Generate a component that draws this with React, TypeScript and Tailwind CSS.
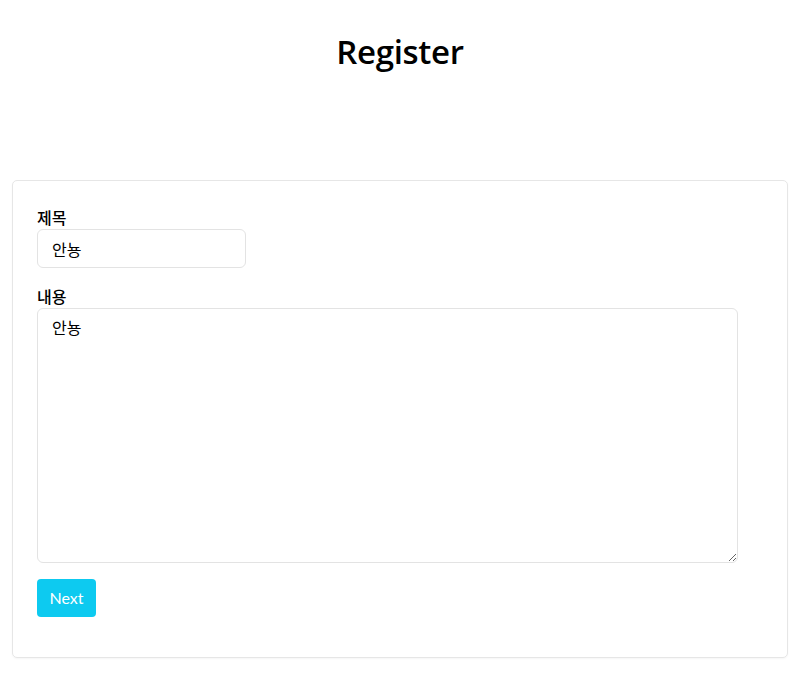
import React, { useState } from 'react';

const App: React.FC = () => {
  const [title, setTitle] = useState('안뇽');
  const [content, setContent] = useState('안뇽');

  return (
    <div className="min-h-screen bg-white text-black font-['Lato','Noto_Sans_CJK_KR',sans-serif]">
      {/* Header */}
      <h1 className="pt-[28px] text-center text-[33px] leading-[48px] font-semibold font-['Open_Sans','Lato',sans-serif] tracking-[-0.3px]">Register</h1>

      {/* Form card */}
      <div className="mx-[12px] mt-[104px] rounded-[5px] border border-[#e6e6e6] px-[24px] pt-[24px] pb-[40px] shadow-[0_1px_2px_rgba(0,0,0,0.04)]">
        <label className="block text-[16px] leading-[24px] font-medium font-['Noto_Sans_CJK_KR',sans-serif]">제목</label>
        <input
          type="text"
          value={title}
          onChange={(e) => setTitle(e.target.value)}
          className="block h-[39px] w-[209px] rounded-[6px] border border-[#e3e3e3] px-[14px] text-[16px] font-['Noto_Sans_CJK_KR',sans-serif] outline-none"
        />

        <label className="mt-[16px] block text-[16px] leading-[24px] font-medium font-['Noto_Sans_CJK_KR',sans-serif]">내용</label>
        <textarea
          value={content}
          onChange={(e) => setContent(e.target.value)}
          className="block h-[255px] w-[701px] rounded-[6px] border border-[#e3e3e3] px-[14px] py-[6px] text-[16px] leading-[24px] font-['Noto_Sans_CJK_KR',sans-serif] outline-none"
        />

        <button className="mt-[16px] h-[38px] w-[59px] rounded-[4px] bg-[#0dcaf0] text-center text-[16px] text-white">
          Next
        </button>
      </div>
    </div>
  );
};

export default App;
